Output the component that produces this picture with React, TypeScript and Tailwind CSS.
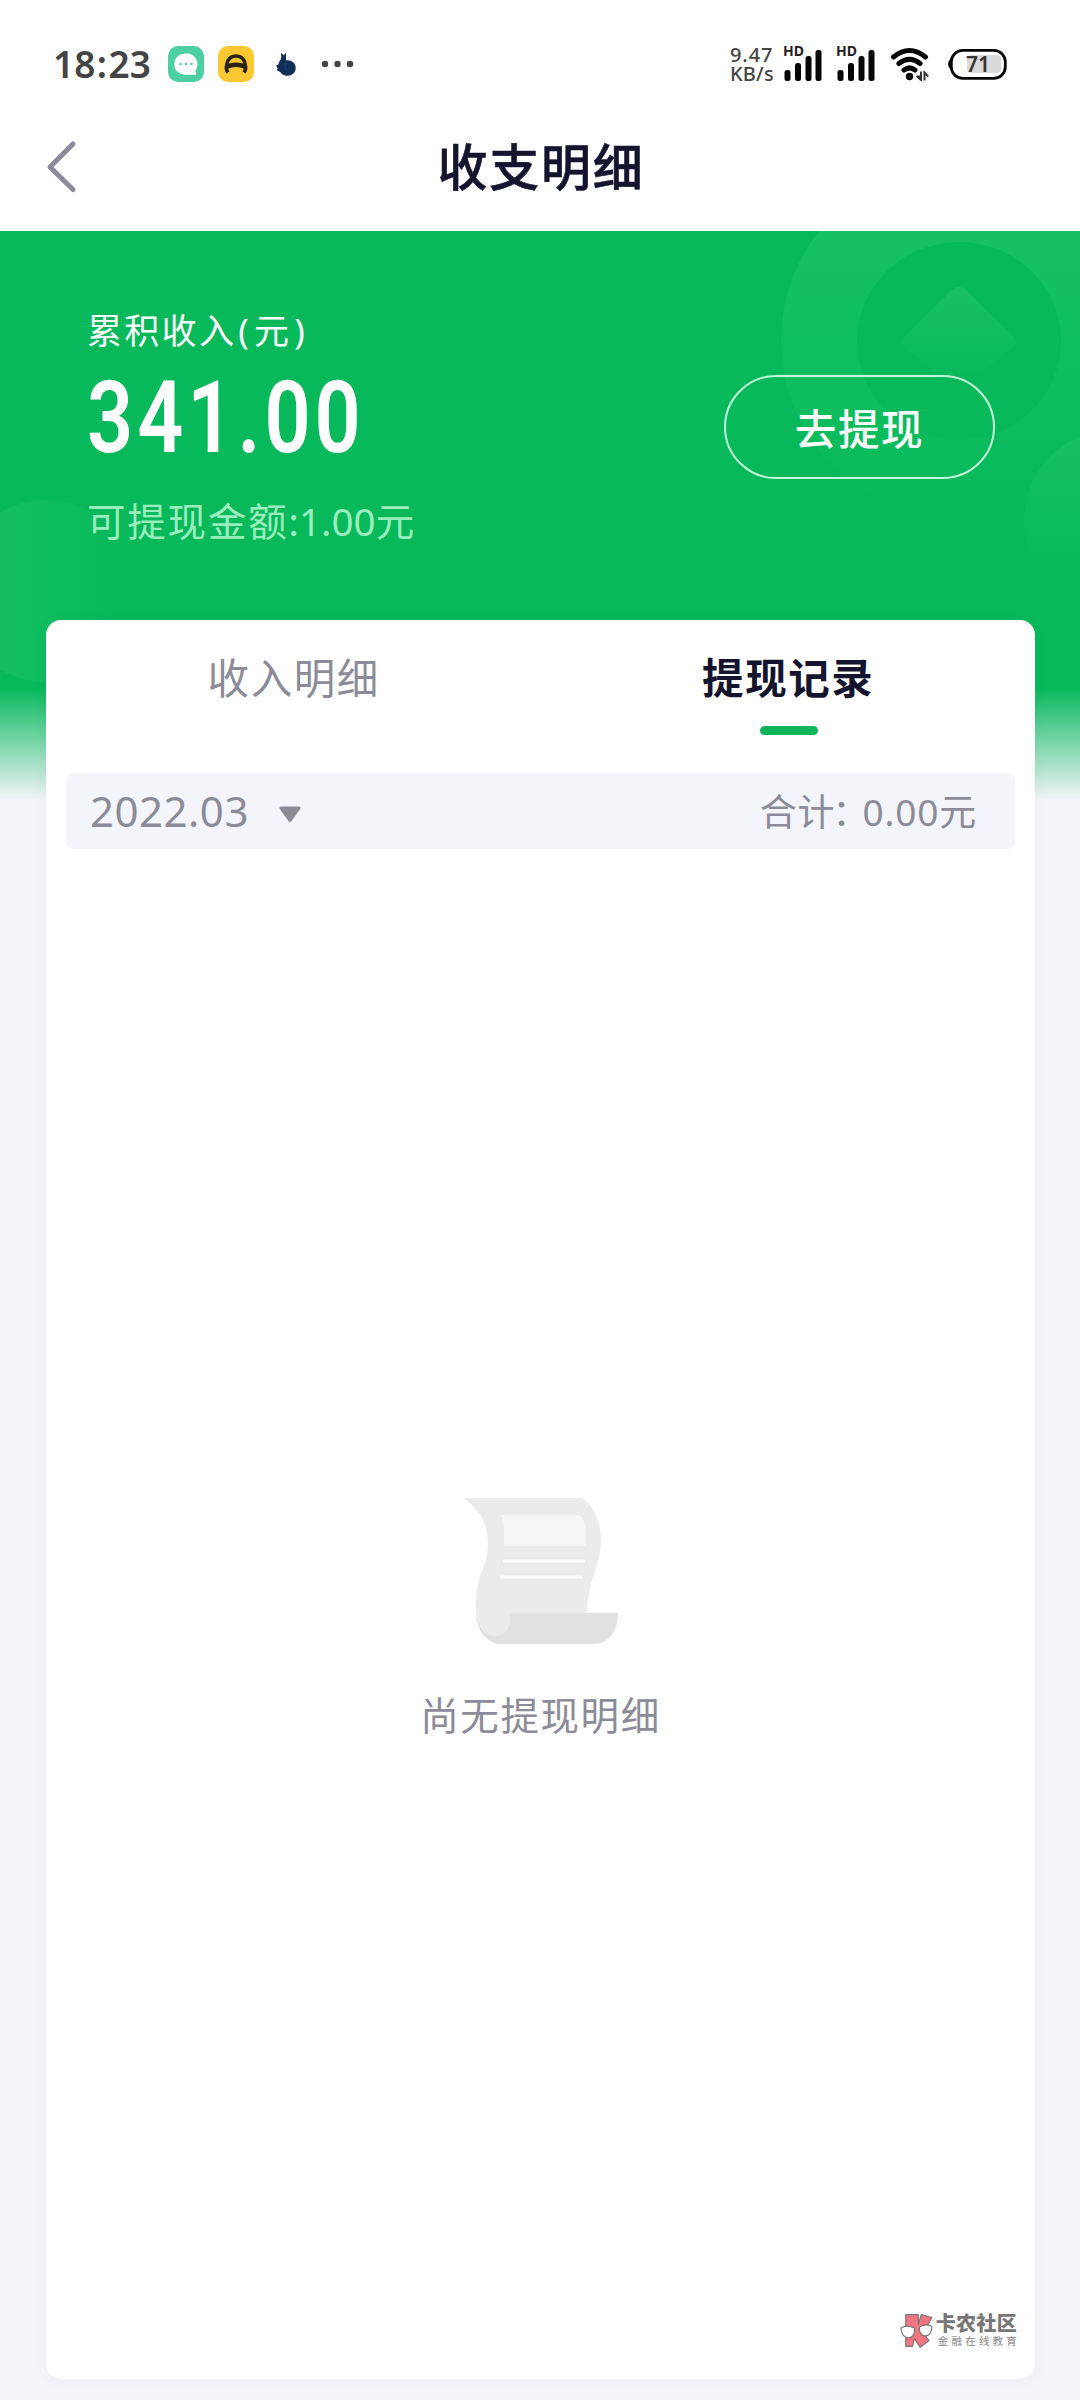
import React, { useState } from 'react';

type TabKey = 'income' | 'withdraw';

const TABS: { key: TabKey; label: string }[] = [
  { key: 'income', label: '收入明细' },
  { key: 'withdraw', label: '提现记录' },
];

function SignalBars() {
  return (
    <div className="relative h-[36px] w-[39px]">
      <span className="absolute left-[-1px] top-[-1px] text-[14px] leading-[12px] font-bold text-[#222]">HD</span>
      <svg className="absolute left-0 top-0" width="39" height="36" viewBox="0 0 39 36" fill="#050505">
        <rect x="0.5" y="24" width="6" height="11" rx="2.5" />
        <rect x="11" y="17" width="6" height="18" rx="2.5" />
        <rect x="21.5" y="10" width="6" height="25" rx="2.5" />
        <rect x="31.5" y="4" width="6" height="31" rx="2.5" />
      </svg>
    </div>
  );
}

function StatusBar() {
  return (
    <div className="flex h-[128px] items-center justify-between pl-[53px] pr-[73px]">
      <div className="flex items-center">
        <span className="w-[115px] text-[37px] leading-[40px] font-semibold text-[#444]">
          18<span className="mx-[1.5px]">:</span>23
        </span>

        {/* 消息 */}
        <svg width="36" height="36" viewBox="0 0 36 36">
          <rect width="36" height="36" rx="10" fill="#4ccfa1" />
          <path d="M18 7.5a10.7 10.7 0 1 0 0 21.3h9.2c1 0 1.3-.6 1-1.4l-.9-2.8A10.7 10.7 0 0 0 18 7.5z" fill="#fff" />
          <circle cx="12.5" cy="18" r="1.2" fill="#4ccfa1" />
          <circle cx="18" cy="18" r="1.2" fill="#4ccfa1" />
          <circle cx="23.5" cy="18" r="1.2" fill="#4ccfa1" />
        </svg>
        {/* 出行 */}
        <svg className="ml-[14px]" width="36" height="36" viewBox="0 0 36 36">
          <rect width="36" height="36" rx="10" fill="#fbc832" />
          <path d="M10 26.5c-1.6-2.3-1.9-4.5-1.5-7C9.3 13.5 12.5 10 18 10s8.7 3.5 9.5 9.5c.4 2.5.1 4.7-1.5 7" fill="none" stroke="#29230f" strokeWidth="3.6" />
          <path d="M9 20.5q9-3.5 18 0" fill="none" stroke="#29230f" strokeWidth="4.6" />
        </svg>
        <svg className="ml-[22px]" width="20" height="24" viewBox="0 0 20 24">
          <path d="M5 1l3 2.3L10 .5v7.800c5.500-.5 9.800 2.700 9.700 7.700-.1 4.600-3.500 7.700-8.200 7.700-3.600 0-5.800-1.500-7.300-3.800L.5 18l1.300-1.200L0 13.500l2.200-.8C2.800 9.500 5 8 5.200 5.500z" fill="#122d57" />
          <path d="M10.5 9.5c-2 3-2 7 1.5 10" fill="none" stroke="#1c4a80" strokeWidth="1" />
        </svg>
        <svg className="ml-[25px]" width="33" height="8" viewBox="0 0 33 8" fill="#444">
          <circle cx="4" cy="4" r="3.2" />
          <circle cx="16.5" cy="4" r="3.2" />
          <circle cx="29" cy="4" r="3.2" />
        </svg>
      </div>

      <div className="flex items-center">
        <div className="w-[54px] text-[20px] leading-[19px] font-medium text-[#444]">
          <div className="tracking-[0.9px]">9.47</div>
          <div className="tracking-[0.2px]">KB/s</div>
        </div>
        <SignalBars />
        <div className="w-[14px]" />
        <SignalBars />
        <svg className="ml-[14px]" width="42" height="34" viewBox="0 0 42 34" fill="none">
          <g stroke="#050505" strokeWidth="5" strokeLinecap="round">
            <path d="M3.500 10q16-13 32 0" />
            <path d="M8.800 16.500q10.700-8.500 21.400 0" />
            <path d="M14 23q5.500-4.200 11 0" />
          </g>
          <circle cx="19.5" cy="29.5" r="3.7" fill="#050505" />
          <path d="M26.5 29.5h4M31 24.5v8.5l-4.5-4M34.5 33.5V25.5l3.7 4" stroke="#333" strokeWidth="2" />
        </svg>
        <svg className="ml-[15px]" width="60" height="34" viewBox="0 0 60 34">
          <path d="M4 11q-6 6 0 12z" fill="#050505" />
          <rect x="4.3" y="3.3" width="54" height="28" rx="11.5" fill="#fff" stroke="#050505" strokeWidth="2.8" />
          <rect x="20" y="8" width="34" height="18" rx="4" fill="#d9d9d9" />
          <text x="31" y="24.7" textAnchor="middle" fontSize="21" fontWeight="600" fill="#333">71</text>
        </svg>
      </div>
    </div>
  );
}

function HeroBackground() {
  return (
    <svg className="absolute left-0 top-[-1px]" width="1080" height="573" viewBox="0 0 1080 573" fill="none">
      <defs>
        <linearGradient id="coin" x1="0" y1="0" x2="0" y2="1">
          <stop offset="0" stopColor="#1ac166" />
          <stop offset="0.55" stopColor="#0fbe5f" />
          <stop offset="1" stopColor="#07b95b" />
        </linearGradient>
        <linearGradient id="coinRight" x1="0" y1="0" x2="0" y2="1">
          <stop offset="0" stopColor="#17c064" />
          <stop offset="0.8" stopColor="#07b95b" />
        </linearGradient>
        <linearGradient id="coinLeft" x1="0" y1="0" x2="1" y2="0">
          <stop offset="0.25" stopColor="#14bf60" />
          <stop offset="0.9" stopColor="#07b95b" />
        </linearGradient>
        <linearGradient id="diamond" x1="0" y1="0" x2="0" y2="1">
          <stop offset="0" stopColor="#18c064" />
          <stop offset="0.95" stopColor="#07b95b" />
        </linearGradient>
      </defs>
      <circle cx="959" cy="111" r="178" fill="url(#coin)" />
      <ellipse cx="959" cy="111" rx="102" ry="99" fill="#07b95b" />
      <path d="M953 59q6-4 12 0l49 48q4 5 0 9l-49 42q-6 4-12 0l-49-42q-5-4 0-9z" fill="url(#diamond)" />
      <circle cx="1114" cy="290" r="90" fill="url(#coinRight)" />
      <circle cx="46" cy="361" r="91" fill="url(#coinLeft)" />
    </svg>
  );
}

function EmptyState() {
  return (
    <div className="flex flex-col items-center pt-[649px]">
      <svg width="154" height="147" viewBox="0 0 154 147">
        <path d="M43 115h111c0 18-9 31-25 31H34C20 143 14 131 12 119z" fill="#e1e1e1" />
        <path d="M0 0h117c10 4 20 22 20 42 0 26-12 34-14 73H46v7c0 10-6 16-15 16-13 0-19-12-19-28 0-39 12-39 12-64C24 21 10 7 0 0z" fill="#ebebeb" />
        <path d="M37 17h77c5 1 8 10 8 15v16H40V32c0-7-1-11-3-15z" fill="#f6f6f6" />
        <path d="M39 63h82M36 79h82" stroke="#fafafa" strokeWidth="3" />
      </svg>
      <p className="mt-[45px] text-[38.5px] leading-[50px] tracking-[1.6px] text-[#8c8b98]">尚无提现明细</p>
    </div>
  );
}

function Watermark() {
  return (
    <div className="absolute bottom-[30px] right-[15px] flex w-[120px] gap-[3px]">
      <svg width="34" height="36" viewBox="0 0 34 36">
        <g stroke="#777" strokeWidth="1.2" strokeLinejoin="round">
          <path d="M6 1h13v10l3-10 11 3-7 13-2 3 6 8-9 7-6-9-2 8H6z" fill="#f17480" />
          <path d="M1 15q6-4 14 0c1 6-2 10-6 10-5 0-8-4-8-10zM20 14q6-4 13-1c0 6-2 10-7 10-4 0-6-4-6-9z" fill="#fff" />
        </g>
      </svg>
      <div className="flex flex-col whitespace-nowrap pt-px">
        <span className="text-[20px] leading-[20px] font-black tracking-[0.3px] text-[#777]">卡农社区</span>
        <span className="mt-px pl-[2px] text-[10.5px] leading-[12px] font-medium tracking-[3.2px] text-[#999]">金融在线教育</span>
      </div>
    </div>
  );
}

export default function App() {
  const [tab, setTab] = useState<TabKey>('withdraw');

  return (
    <div className="flex h-[2400px] w-[1080px] flex-col overflow-hidden bg-[#f4f5fa] font-['Noto_Sans','Noto_Sans_CJK_SC',sans-serif]">
      <header className="h-[231px] shrink-0 bg-white">
        <StatusBar />
        <div className="grid h-[78px] grid-cols-[1fr_auto_1fr] items-center">
          <button className="ml-[45px] w-8" aria-label="返回">
            <svg width="32" height="54" viewBox="0 0 32 54" fill="none">
              <path d="M28 4L5 27L28 49.500" stroke="#8c8b9c" strokeWidth="5" strokeLinecap="round" strokeLinejoin="round" />
            </svg>
          </button>
          <h1 className="pl-[2px] text-[50px] leading-[78px] font-medium tracking-[1.8px] text-[#14142e] [-webkit-text-stroke:0.6px_#14142e]">收支明细</h1>
        </div>
      </header>

      <main className="relative flex h-[2169px] flex-col">
        <div className="absolute inset-x-0 top-0 h-[572px] overflow-hidden bg-[linear-gradient(to_bottom,#07b95b_0px,#07b95b_457px,#f4f5fa_570px)]">
          <HeroBackground />
        </div>

        <section className="relative flex h-[389px] shrink-0 justify-between pl-[87px] pr-[85px] text-white">
          <div className="pt-[75px]">
            <p className="text-[35px] leading-[50px] tracking-[2.3px]">
              累积收入<span className="ml-[2px] mr-[3px]">(</span>元<span className="ml-[3px]">)</span>
            </p>
            <p className="mt-[12px] h-[100px] origin-left scale-x-[0.8] font-[Roboto] text-[101px] leading-[100px] font-semibold tracking-[5px]">341.00</p>
            <p className="mt-[28px] text-[38.5px] leading-[50px] tracking-[1.8px] text-[#9aedbd]">
              可提现金额<span className="tracking-[0.1px]">:1.00</span>元
            </p>
          </div>
          <button className="mt-[144px] h-[104px] w-[271px] rounded-full border-2 border-[#c3f5d8] pt-[5px] text-[41.5px] font-medium tracking-[1.6px]">
            去提现
          </button>
        </section>

        <section className="relative ml-[46px] h-[1759px] w-[989px] rounded-[15px] bg-white px-5 shadow-[0_2px_16px_rgba(40,40,90,0.04)]">
          <div className="-mx-5 grid h-[153px] grid-cols-2">
            {TABS.map(({ key, label }) => (
              <button key={key} onClick={() => setTab(key)} className="flex flex-col items-center pl-px pt-[30px]">
                <span className={`text-[41.5px] leading-[56px] tracking-[1.6px] ${tab === key ? 'font-bold text-[#14142e]' : 'text-[#8c8b98]'}`}>
                  {label}
                </span>
                {tab === key && <span className="ml-px mt-[20px] h-[9px] w-[58px] rounded-full bg-[#0db55b]" />}
              </button>
            ))}
          </div>

          <div className="flex h-[76px] items-center justify-between rounded-[7px] bg-[#f4f5fa] pl-[24px] pr-[38px] text-[#8c8b98]">
            <div className="flex items-center gap-[29px]">
              <span className="text-[42px] leading-[76px] tracking-[0.5px]">2022.03</span>
              <svg className="mt-[7px]" width="24" height="18" viewBox="0 0 24 18">
                <path d="M3 2h18l-9 12.5z" fill="#8c8b98" stroke="#8c8b98" strokeWidth="3" strokeLinejoin="round" />
              </svg>
            </div>
            <span className="pt-px text-[37px] leading-[76px] tracking-[0.8px]">
              合计<span className="-ml-[3px] mr-[11px] [font-feature-settings:'halt']">：</span>0.00元
            </span>
          </div>

          <EmptyState />
          <Watermark />
        </section>
      </main>
    </div>
  );
}
